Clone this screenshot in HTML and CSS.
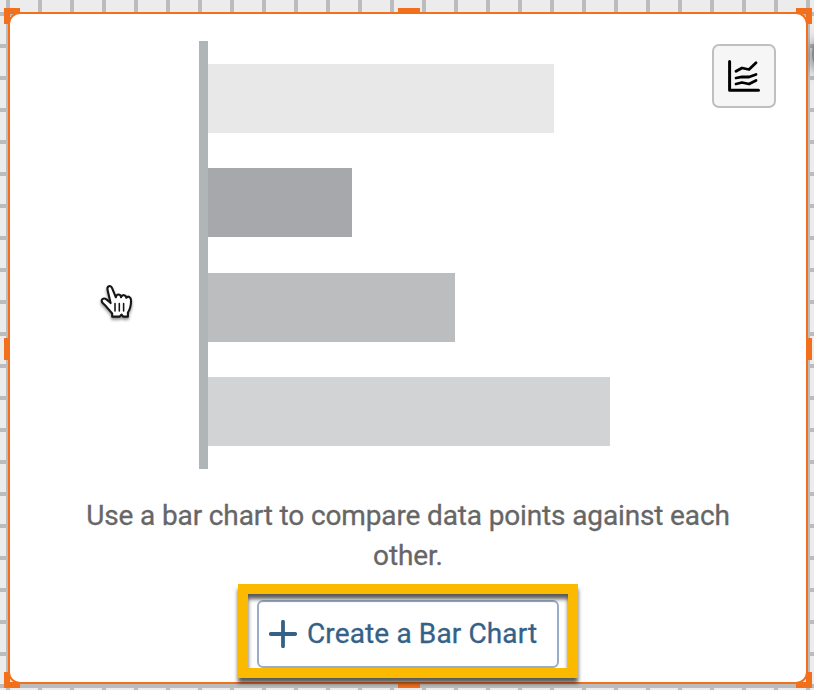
FILE: index.html
```
<!DOCTYPE html>
<html lang="en">
<head>
<meta charset="utf-8">
<title>Bar Chart</title>
<link rel="stylesheet" href="styles.css">
</head>
<body>
<main class="canvas">
  <i class="edge-shade"></i>
  <section class="card">
    <button class="chart-type" aria-label="Chart type">
      <svg width="60" height="60" viewBox="714 46 60 60" fill="none" stroke="#000" stroke-width="3" stroke-linecap="round" stroke-linejoin="round"><path d="M729.6 61.5V90.3H758.5"/><path d="M736 71.3L742 68L749 69.5L756 62.8M736 78L742 76.8L749 77L756 74.5M736 84L742 82.5L749 84L756 80.5" stroke-width="2.8"/></svg>
    </button>
    <div class="plot">
      <div class="bar b1"></div>
      <div class="bar b2"></div>
      <div class="bar b3"></div>
      <div class="bar b4"></div>
    </div>
    <p class="hint">Use a bar chart to compare data points against each<br>other.</p>
    <button class="create">
      <svg width="28" height="28" viewBox="0 0 28 28"><path d="M14 1.8V26.2M1.8 14H26.2" stroke="#346187" stroke-width="3.8" stroke-linecap="round"/></svg>
      <span class="create-label">Create a Bar Chart</span>
    </button>
  </section>
  <i class="handle tl"></i><i class="handle tr"></i><i class="handle bl"></i><i class="handle br"></i>
  <i class="handle top"></i><i class="handle bottom"></i><i class="handle left"></i><i class="handle right"></i>
  <i class="highlight"></i>
  <svg class="pointer" width="42" height="44" viewBox="0 0 40 42" fill="#fff" stroke="#161616" stroke-width="2" stroke-linejoin="round" stroke-linecap="round"><path d="M12 22L9.2 10C8 5.5 12 4.2 13.5 8L17 16.5C17.5 13 21.5 13 22 16.5C23 13.5 26.5 14 27 17C28.5 15 31.5 16 31.5 19.5C31.5 25 30.5 28 28.5 31V35H24L22.5 33L20.5 35H13.5V32C10 28 8 25 4.5 22C1.8 19 5 16.5 8 18.5Z"/><path d="M16.2 22.5V29.5M20.3 22.5V29.5M24.4 22.5V29.5" stroke-width="1.5"/></svg>
</main>
</body>
</html>
```
FILE: styles.css
```
body { margin: 0; }
* { box-sizing: border-box; }
button { padding: 0; margin: 0; }
.canvas {
  position: relative;
  width: 814px;
  height: 690px;
  padding: 12px 0 0 8px;
  overflow: hidden;
  background-color: #ececec;
  background-image: linear-gradient(90deg, #bbbcbe 4px, transparent 4px), linear-gradient(#bbbcbe 4px, transparent 4px);
  background-size: 32px 32px;
  background-position: 6px 12px;
  font-family: Roboto, "Liberation Sans", sans-serif;
  font-size: 28px;
}
.card {
  position: relative;
  width: 800px;
  height: 672px;
  border: 2px solid #f26f1c;
  border-radius: 12px;
  background: #fff;
  display: flex;
  flex-direction: column;
  align-items: center;
}
.edge-shade {
  position: absolute;
  left: 812px;
  top: 38px;
  width: 24px;
  height: 32px;
  border-radius: 50%;
  background: #85868a;
  box-shadow: 0 2px 12px 2px rgba(0,0,0,.45);
}
.chart-type {
  position: absolute;
  left: 702px;
  top: 30px;
  width: 64px;
  height: 64px;
  border: 2px solid #bfbfbf;
  border-radius: 7px;
  background: #f6f6f6;
}
.chart-type svg { display: block; }
.plot {
  align-self: flex-start;
  margin: 27px 0 0 189px;
  height: 428px;
  padding-top: 23px;
  border-left: 9px solid #b0b5b8;
  display: flex;
  flex-direction: column;
  gap: 35.3px;
}
.bar { height: 69px; flex: none; }
.b1 { width: 346px; background: #e8e8e8; }
.b2 { width: 144px; background: #a7a8ac; }
.b3 { width: 247px; background: #bcbdbf; }
.b4 { width: 402px; background: #d2d3d5; }
.hint {
  margin: 27px 0 0;
  line-height: 40px;
  letter-spacing: -.14px;
  -webkit-text-stroke: .3px #666;
  text-align: center;
  white-space: nowrap;
  color: #666;
}
.create {
  width: 302px;
  height: 68px;
  margin-top: 24px;
  padding-left: 10px;
  border: 2px solid #9aadc7;
  border-radius: 6px;
  background: #fff;
  display: flex;
  align-items: center;
  gap: 10px;
  font: inherit;
  color: #346187;
  white-space: nowrap;
}
.create-label {
  padding-bottom: 2px;
  letter-spacing: .13px;
  -webkit-text-stroke: .3px #346187;
}
.handle { position: absolute; border: 0 solid #f26f1c; }
.tl, .tr, .bl, .br { width: 16px; height: 16px; }
.tl { left: 4px; top: 8px; border-width: 6px 0 0 6px; }
.tr { left: 796px; top: 8px; border-width: 6px 6px 0 0; }
.bl { left: 4px; top: 672px; border-width: 0 0 6px 6px; }
.br { left: 796px; top: 672px; border-width: 0 6px 6px 0; }
.top, .bottom { left: 398px; width: 22px; border-top-width: 6px; }
.top { top: 8px; }
.bottom { top: 682px; }
.left, .right { top: 338px; height: 22px; border-left-width: 6px; }
.left { left: 4px; }
.right { left: 806px; }
.highlight {
  position: absolute;
  left: 238px;
  top: 584px;
  width: 340px;
  height: 94px;
  border: 10px solid #fbba00;
  filter: drop-shadow(0 5px 2px rgba(0,0,0,.65));
}
.pointer {
  position: absolute;
  left: 98px;
  top: 280px;
  filter: drop-shadow(0 2px 1.5px rgba(0,0,0,.45));
}
```
